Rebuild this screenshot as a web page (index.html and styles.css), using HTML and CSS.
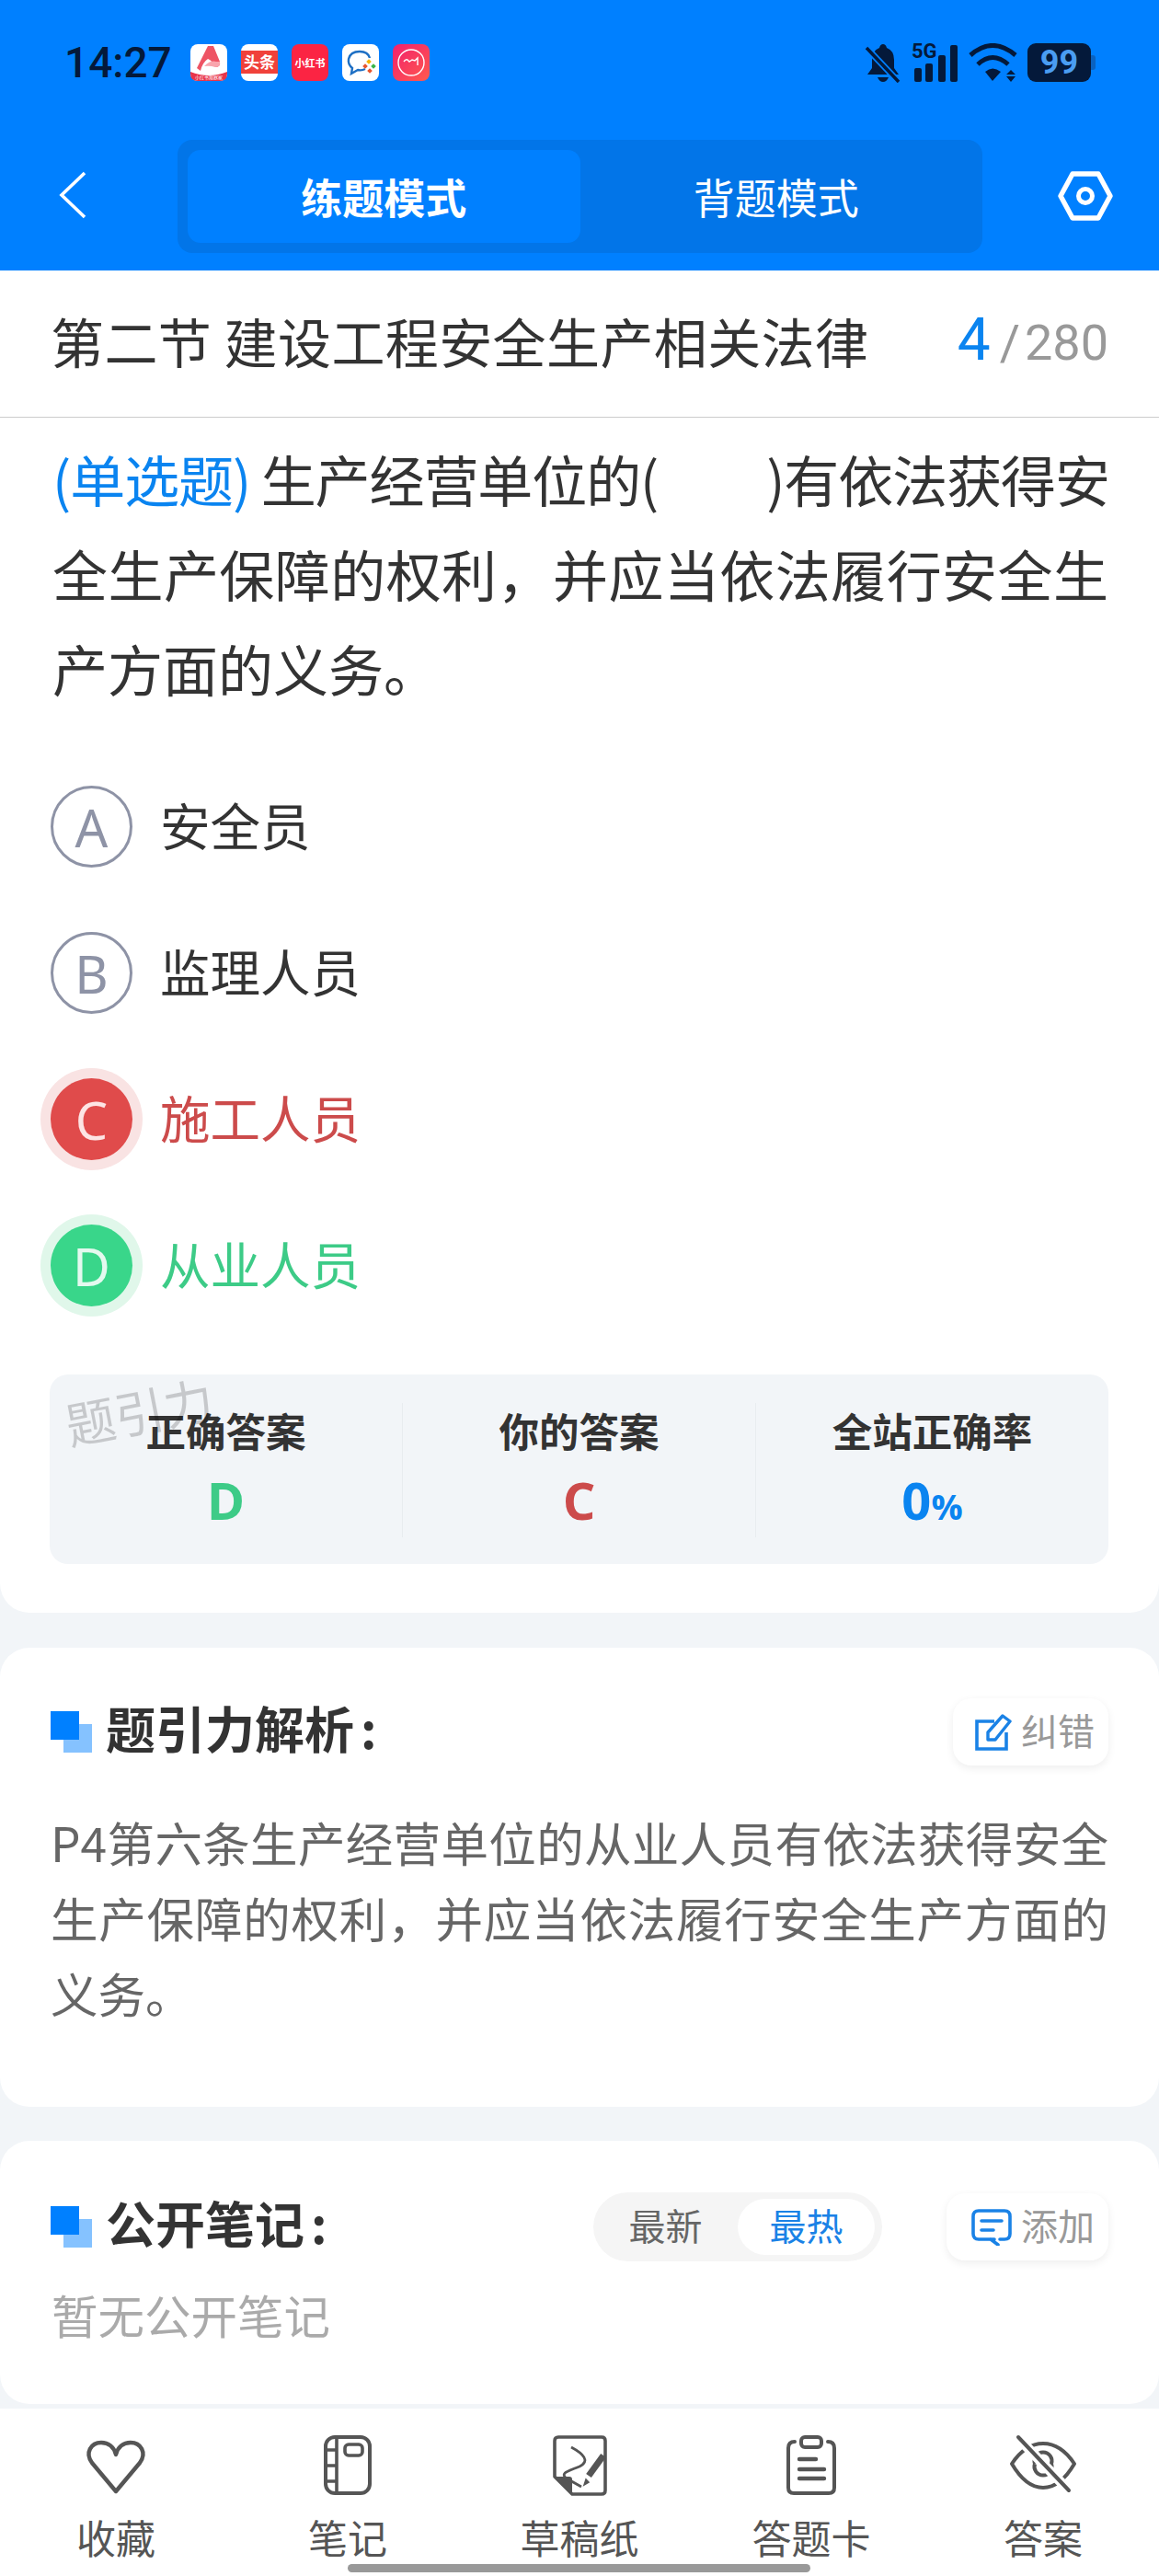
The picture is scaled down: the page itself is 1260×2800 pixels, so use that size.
FILE: index.html
```html
<!DOCTYPE html>
<html>
<head>
    <meta charset="utf-8">
    <link rel="stylesheet" href="styles.css">
</head>

<body>
    <div class="page">
        <div class="topbar">
            <div class="status-bar">
                <span class="clock">14:27</span>
                <div class="app-icons">
                    <svg class="app-icon" viewBox="0 0 40 40">
                        <rect width="40" height="40" rx="8" fill="#fff"/>
                        <path d="M0 30 Q20 38 40 30 V32 Q40 40 32 40 H8 Q0 40 0 32 Z" fill="#e8344a"/>
                        <path d="M7 26 L19 2 H25 L32 19 Q33 25 27 25 Q24 18 19 16 Q13 20 11 29 Z" fill="#ee5464"/>
                        <path d="M15 24 Q22 17 28 19 L32 19 Q33 25 27 25 Q21 23 15 24 Z" fill="#f9a5ad"/>
                        <text class="logo-tiny" x="20" y="38" text-anchor="middle">小红书观察家</text>
                    </svg>
                    <svg class="app-icon" viewBox="0 0 40 40">
                        <rect width="40" height="40" rx="8" fill="#fff"/>
                        <rect y="7" width="40" height="25" fill="#f0413a"/>
                        <text class="logo-toutiao" x="20" y="26" text-anchor="middle">头条</text>
                    </svg>
                    <svg class="app-icon" viewBox="0 0 40 40">
                        <rect width="40" height="40" rx="8" fill="#fb2443"/>
                        <text class="logo-xhs" x="20" y="25" text-anchor="middle">小红书</text>
                    </svg>
                    <svg class="app-icon" viewBox="0 0 40 40">
                        <rect width="40" height="40" rx="8" fill="#fff"/>
                        <path d="M25 27 Q21 29 17 28 L10 32 L11 26 Q6 22 7 16 Q9 8 19 8 Q28 8 30 15" fill="none" stroke="#1d6fc4" stroke-width="2.4"/>
                        <rect x="27" y="17" width="4" height="4" transform="rotate(45 29 19)" fill="#f4b400"/>
                        <rect x="32" y="22" width="4" height="4" transform="rotate(45 34 24)" fill="#3bb54a"/>
                        <rect x="23" y="22" width="4" height="4" transform="rotate(45 25 24)" fill="#e8552d"/>
                        <rect x="28" y="27" width="4" height="4" transform="rotate(45 30 29)" fill="#e8552d"/>
                    </svg>
                    <svg class="app-icon" viewBox="0 0 40 40">
                        <defs>
                            <linearGradient id="meituGrad" x1="0" y1="0" x2="1" y2="1">
                                <stop offset="0" stop-color="#f2206e"/>
                                <stop offset="1" stop-color="#ff5a4d"/>
                            </linearGradient>
                        </defs>
                        <rect width="40" height="40" rx="8" fill="url(#meituGrad)"/>
                        <circle cx="20" cy="20" r="14" fill="none" stroke="#fff" stroke-width="1.4"/>
                        <path d="M12 19 Q14 16 16 17 L18 19 L21 17 L24 18 L27 15 V23" fill="none" stroke="#fff" stroke-width="1.4"/>
                    </svg>
                </div>
                <div class="status-right">
                    <svg class="st-bell" viewBox="0 0 38 43">
                        <path d="M19 1 Q22 1 23 5 Q31 8 31 18 V27 L36 34 H2 L7 27 V18 Q7 8 15 5 Q16 1 19 1 Z M13 37 H25 Q23 42 19 42 Q15 42 13 37 Z" fill="#04193a"/>
                        <path d="M1 5 L36 42" stroke="#0080ff" stroke-width="7"/>
                        <path d="M1 5 L36 42" stroke="#04193a" stroke-width="3.5"/>
                    </svg>
                    <div class="st-signal">
                        <span class="st-5g">5G</span>
                        <svg class="st-bars" viewBox="0 0 50 42">
                            <rect x="3" y="27" width="8" height="15" rx="2"/>
                            <rect x="15" y="22" width="8" height="20" rx="2"/>
                            <rect x="29" y="13" width="8" height="29" rx="2"/>
                            <rect x="42" y="2" width="8" height="40" rx="2"/>
                        </svg>
                    </div>
                    <svg class="st-wifi" viewBox="0 0 54 42">
                        <path d="M2 13 Q26 -8 51 13" fill="none" stroke="#04193a" stroke-width="5"/>
                        <path d="M10 23 Q26 8 43 23" fill="none" stroke="#04193a" stroke-width="5"/>
                        <path d="M18 31 Q26 24 35 31 L26 41 Z" fill="#04193a"/>
                        <path d="M46 29 L51 34 H41 Z M41 36 H51 L46 42 Z" fill="#04193a"/>
                    </svg>
                    <div class="st-battery"><span class="st-level">99</span></div>
                </div>
            </div>
            <div class="nav">
                <svg class="nav-back" viewBox="0 0 30 52">
                    <path d="M28 2 L3 26 L28 50" fill="none" stroke="#fff" stroke-width="3.6"/>
                </svg>
                <div class="mode-switch">
                    <div class="mode-tab active">练题模式</div>
                    <div class="mode-tab">背题模式</div>
                </div>
                <svg class="nav-gear" viewBox="0 0 60 54">
                    <path d="M16 3 H44 L57 27 L44 51 H16 L3 27 Z" fill="none" stroke="#fff" stroke-width="5.4" stroke-linejoin="round"/>
                    <circle cx="30" cy="27" r="7.5" fill="none" stroke="#fff" stroke-width="5"/>
                </svg>
            </div>
        </div>

        <div class="card question-card">
            <div class="title-row">
                <div class="chapter">第二节 建设工程安全生产相关法律</div>
                <div class="counter"><span class="counter-now">4</span><span class="counter-slash">/</span><span class="counter-all">280</span></div>
            </div>
            <div class="question"><span class="q-first"><span class="q-type">(单选题)</span> 生产经营单位的(　　)有依法获得安</span>全生产保障的权利，并应当依法履行安全生产方面的义务。</div>

            <div class="options">
                <div class="option">
                    <div class="opt-letter">A</div>
                    <div class="opt-text">安全员</div>
                </div>
                <div class="option">
                    <div class="opt-letter">B</div>
                    <div class="opt-text">监理人员</div>
                </div>
                <div class="option wrong">
                    <div class="opt-letter">C</div>
                    <div class="opt-text">施工人员</div>
                </div>
                <div class="option right">
                    <div class="opt-letter">D</div>
                    <div class="opt-text">从业人员</div>
                </div>
            </div>

            <div class="stats">
                <div class="stat">
                    <div class="stat-label">正确答案</div>
                    <div class="stat-value green">D</div>
                </div>
                <div class="stat">
                    <div class="stat-label">你的答案</div>
                    <div class="stat-value red">C</div>
                </div>
                <div class="stat">
                    <div class="stat-label">全站正确率</div>
                    <div class="stat-value blue">0<span class="stat-unit">%</span></div>
                </div>
                <div class="watermark">题引力</div>
            </div>
        </div>

        <div class="card analysis-card">
            <div class="section-head">
                <div class="section-title"><span class="square-mark"></span><span class="section-label">题引力解析<span class="colon">:</span></span></div>
                <div class="small-btn fix-btn">
                    <svg class="btn-icon" viewBox="0 0 40 40">
                        <path d="M21 8 H2 V38 H34 V20" fill="none" stroke="#1a82e6" stroke-width="3.6"/>
                        <path d="M14 28 V20 L30 2 L38 8 L22 28 Z" fill="none" stroke="#1a82e6" stroke-width="3.4" stroke-linejoin="round"/>
                    </svg>
                    <span class="btn-text">纠错</span>
                </div>
            </div>
            <div class="analysis-text">P4第六条生产经营单位的从业人员有依法获得安全生产保障的权利，并应当依法履行安全生产方面的义务。</div>
        </div>

        <div class="card notes-card">
            <div class="section-head">
                <div class="section-title"><span class="square-mark"></span><span class="section-label">公开笔记<span class="colon">:</span></span></div>
                <div class="notes-tools">
                    <div class="sort-pill">
                        <div class="sort-item"><span class="btn-text">最新</span></div>
                        <div class="sort-item active"><span class="btn-text">最热</span></div>
                    </div>
                    <div class="small-btn">
                        <svg class="btn-icon wide" viewBox="0 0 44 40">
                            <path d="M25 33 H8 Q2 33 2 27 V8 Q2 2 8 2 H36 Q42 2 42 8 V27 Q42 33 36 33 H31 M21 33 L29 39" fill="none" stroke="#1a82e6" stroke-width="3.6" stroke-linecap="round"/>
                            <path d="M11 13 H33 M11 23 H24" fill="none" stroke="#1a82e6" stroke-width="3.6" stroke-linecap="round"/>
                        </svg>
                        <span class="btn-text">添加</span>
                    </div>
                </div>
            </div>
            <div class="no-notes">暂无公开笔记</div>
        </div>

        <div class="tabbar">
            <div class="tab">
                <svg class="tab-icon" viewBox="0 0 72 70">
                    <path d="M36 63 L10 32 C2 21 9 10 20 10 C28 10 34 15 36 23 C38 15 44 10 52 10 C63 10 70 21 62 32 Z" fill="none" stroke="#555" stroke-width="4.4" stroke-linejoin="round"/>
                </svg>
                <span>收藏</span>
            </div>
            <div class="tab">
                <svg class="tab-icon" viewBox="0 0 72 70">
                    <rect x="12" y="4" width="48" height="61" rx="10" fill="none" stroke="#555" stroke-width="4"/>
                    <path d="M24 4 V65 M12 18 H24 M12 35 H24 M12 52 H24" fill="none" stroke="#555" stroke-width="3.6"/>
                    <rect x="33" y="12" width="19" height="12" rx="4" fill="none" stroke="#555" stroke-width="3.6"/>
                </svg>
                <span>笔记</span>
            </div>
            <div class="tab">
                <svg class="tab-icon" viewBox="0 0 72 70">
                    <path d="M9 47 V8 Q9 4 13 4 H60 Q64 4 64 8 V62 Q64 66 60 66 H28 Z" fill="none" stroke="#555" stroke-width="3.6" stroke-linejoin="round"/>
                    <path d="M9 47 L28 66 V50 Q28 47 25 47 Z" fill="#555"/>
                    <path d="M27 15 C40 22 48 30 36 36 C24 41 14 43 22 49 L38 58" fill="none" stroke="#555" stroke-width="2.8"/>
                    <path d="M62 24 L46 46" stroke="#555" stroke-width="7"/>
                    <path d="M43 50 L41 56 L46 53 Z" fill="#555" stroke="#555" stroke-width="1.5"/>
                </svg>
                <span>草稿纸</span>
            </div>
            <div class="tab">
                <svg class="tab-icon" viewBox="0 0 72 70">
                    <path d="M18 9 Q11 9 11 16 V59 Q11 65 17 65 H55 Q61 65 61 59 V16 Q61 9 54 9" fill="none" stroke="#555" stroke-width="4" stroke-linecap="round"/>
                    <rect x="25" y="4" width="22" height="11" rx="4" fill="none" stroke="#555" stroke-width="4"/>
                    <path d="M23 28 H41 M23 39 H50 M23 49 H50" fill="none" stroke="#555" stroke-width="4.4" stroke-linecap="round"/>
                </svg>
                <span>答题卡</span>
            </div>
            <div class="tab">
                <svg class="tab-icon" viewBox="0 0 72 70">
                    <path d="M2 33 C12 18 24 11 36 11 C48 11 60 18 70 33 C60 50 48 59 36 59 C24 59 12 50 2 33 Z" fill="none" stroke="#555" stroke-width="4" stroke-linejoin="round"/>
                    <path d="M27 33 A9.5 9.5 0 1 0 45 33 A9.5 9.5 0 1 0 27 33" fill="none" stroke="#555" stroke-width="4"/>
                    <path d="M10 6 L63 61" stroke="#fff" stroke-width="11"/>
                    <path d="M9 4 L64 62" stroke="#555" stroke-width="4" stroke-linecap="round"/>
                </svg>
                <span>答案</span>
            </div>
            <div class="home-bar"></div>
        </div>
    </div>
</body>
</html>
```

FILE: styles.css
```css
* {
    box-sizing: border-box;
}

body {
    margin: 0;
    font-family: "Noto Sans CJK SC", "Noto Sans", sans-serif;
    color: #333;
}

.page {
    width: 1260px;
    height: 2800px;
    overflow: hidden;
    background-color: #f2f5f8;
    display: flex;
    flex-direction: column;
}

/* top blue area */
.topbar {
    height: 294px;
    background-color: #0080ff;
    flex-shrink: 0;
}

.status-bar {
    height: 136px;
    padding: 0 74px 0 70px;
    display: flex;
    align-items: center;
}

.clock {
    width: 137px;
    font-family: Roboto, sans-serif;
    font-size: 46px;
    font-weight: 500;
    color: #04193a;
}

.app-icons {
    display: flex;
    gap: 15px;
}

.app-icon {
    width: 40px;
    height: 40px;
    display: block;
}

.logo-tiny {
    font-size: 5px;
    fill: #fff;
}

.logo-toutiao {
    font-size: 17px;
    font-weight: 700;
    fill: #fff;
}

.logo-xhs {
    font-size: 11px;
    font-weight: 700;
    fill: #fff;
}

.status-right {
    margin-left: auto;
    display: flex;
    align-items: center;
}

.st-bell {
    width: 38px;
    height: 43px;
    display: block;
}

.st-signal {
    width: 50px;
    height: 42px;
    margin-left: 12px;
    position: relative;
}

.st-5g {
    position: absolute;
    left: 0;
    top: -3px;
    font-family: Roboto, sans-serif;
    font-size: 22px;
    font-weight: 700;
    line-height: 24px;
    color: #04193a;
}

.st-bars {
    width: 50px;
    height: 42px;
    display: block;
    fill: #04193a;
}

.st-wifi {
    width: 54px;
    height: 42px;
    margin-left: 12px;
    display: block;
}

.st-battery {
    width: 69px;
    height: 42px;
    margin-left: 10px;
    background-color: #04193a;
    border-radius: 9px;
    display: flex;
    align-items: center;
    justify-content: center;
    position: relative;
}

.st-battery::after {
    content: "";
    position: absolute;
    right: -5px;
    top: 13px;
    width: 5px;
    height: 16px;
    background-color: #0a62c0;
    border-radius: 0 3px 3px 0;
}

.st-level {
    font-family: Roboto, sans-serif;
    font-size: 36px;
    font-weight: 700;
    color: #4a9df2;
}

.nav {
    height: 158px;
    padding: 16px 50px 0 64px;
    display: flex;
    align-items: flex-start;
}

.nav-back {
    width: 30px;
    height: 52px;
    margin-top: 34px;
    display: block;
}

.mode-switch {
    width: 875px;
    height: 123px;
    margin-left: 99px;
    padding: 11px;
    background-color: #0275e8;
    border-radius: 16px;
    display: flex;
}

.mode-tab {
    flex: 1;
    border-radius: 14px;
    display: flex;
    align-items: center;
    justify-content: center;
    font-size: 45px;
    color: #fff;
}

.mode-tab.active {
    background-color: #0080ff;
    font-weight: 700;
}

.nav-gear {
    width: 60px;
    height: 54px;
    margin-left: 82px;
    margin-top: 34px;
    display: block;
}

/* cards */
.card {
    background-color: #fff;
    flex-shrink: 0;
}

.question-card {
    height: 1459px;
    border-radius: 0 0 32px 32px;
}

.title-row {
    height: 160px;
    padding: 0 55px 8px 55px;
    border-bottom: 1px solid #ccc;
    display: flex;
    align-items: center;
    justify-content: space-between;
}

.chapter {
    font-size: 58px;
    letter-spacing: 0.4px;
    color: #333;
    line-height: 1;
}

.counter {
    display: flex;
    align-items: baseline;
    font-family: Roboto, sans-serif;
    color: #999;
    font-size: 54px;
}

.counter-now {
    font-size: 64px;
    color: #0a84f0;
    margin-right: 10px;
}

.counter-slash {
    margin-right: 5px;
}

.question {
    margin: 14px 55px 0 57px;
    font-size: 60px;
    line-height: 103px;
    text-align: justify;
    color: #333;
}

.q-first {
    letter-spacing: -2px;
}

.q-type {
    color: #0a84f0;
}

.options {
    margin: 77px 0 0 55px;
    display: flex;
    flex-direction: column;
    gap: 70px;
}

.option {
    height: 89px;
    display: flex;
    align-items: center;
}

.opt-letter {
    width: 89px;
    height: 89px;
    border: 3px solid #8e93a6;
    border-radius: 50%;
    display: flex;
    align-items: center;
    justify-content: center;
    font-family: "Noto Sans", sans-serif;
    font-size: 56px;
    font-weight: 400;
    color: #8e93a6;
}

.opt-text {
    margin-left: 30px;
    padding-bottom: 7px;
    font-size: 54.5px;
    color: #333;
}

.option.wrong .opt-letter {
    border: none;
    background-color: #e04b4b;
    color: #fde4e4;
    box-shadow: 0 0 0 11px #f9e3e3;
}

.option.wrong .opt-text {
    color: #cc4b4b;
}

.option.right .opt-letter {
    border: none;
    background-color: #39d68a;
    color: #e4f9ef;
    box-shadow: 0 0 0 11px #e0f7ea;
}

.option.right .opt-text {
    color: #3dcb87;
}

.stats {
    height: 206px;
    margin: 74px 55px 0 54px;
    padding-top: 31px;
    background-color: #f2f5f8;
    border-radius: 20px;
    display: flex;
    position: relative;
}

.stat {
    flex: 1;
    height: 146px;
    border-right: 1px solid #e8ecef;
    text-align: center;
}

.stat:nth-child(3) {
    border-right: none;
}

.stat-label {
    font-size: 43.5px;
    font-weight: 700;
    line-height: 60px;
    color: #333;
}

.stat-value {
    margin-top: 10px;
    font-family: "Open Sans", sans-serif;
    font-size: 56px;
    font-weight: 700;
    line-height: 70px;
}

.stat-unit {
    font-size: 38px;
}

.green {
    color: #3dcb87;
}

.red {
    color: #cc4b4b;
}

.blue {
    color: #0a84f0;
}

.watermark {
    position: absolute;
    left: 16px;
    top: 9px;
    font-size: 54px;
    line-height: 60px;
    color: rgba(0, 0, 0, 0.18);
    transform: rotate(-11deg);
}

.analysis-card {
    height: 499px;
    margin-top: 38px;
    padding: 55px 55px 0 55px;
    border-radius: 32px;
}

.notes-card {
    height: 286px;
    margin-top: 37px;
    padding: 56px 55px 0 55px;
    border-radius: 32px;
}

.section-head {
    display: flex;
    align-items: center;
    justify-content: space-between;
}

.section-title {
    display: flex;
    align-items: center;
    font-size: 54px;
    font-weight: 700;
    color: #333;
}

.section-label {
    margin-top: -10px;
}

.colon {
    margin-left: 7px;
}

.square-mark {
    width: 45px;
    height: 45px;
    margin-right: 15px;
    background: linear-gradient(#0080ff, #0080ff) left top / 31px 31px no-repeat,
        linear-gradient(#85c2ff, #85c2ff) right bottom / 31px 31px no-repeat;
}

.small-btn {
    height: 73px;
    padding: 0 15px 0 27px;
    background-color: #fff;
    border-radius: 20px;
    box-shadow: 0 3px 10px rgba(0, 0, 0, 0.07);
    display: flex;
    align-items: center;
    gap: 10px;
    font-size: 40px;
    color: #999;
}

.small-btn.fix-btn {
    padding-left: 24px;
}

.btn-text {
    padding-bottom: 5px;
}

.btn-icon {
    width: 40px;
    height: 40px;
    display: block;
}

.btn-icon.wide {
    width: 44px;
    height: 40px;
}

.notes-tools {
    display: flex;
    align-items: center;
    gap: 70px;
}

.sort-pill {
    width: 314px;
    height: 75px;
    padding: 7px 8px 7px 0;
    background-color: #f5f5f5;
    border-radius: 38px;
    display: flex;
    align-items: center;
    font-size: 40px;
    color: #666;
}

.sort-item {
    width: 157px;
    height: 61px;
    border-radius: 31px;
    display: flex;
    align-items: center;
    justify-content: center;
}

.sort-item.active {
    width: 149px;
    background-color: #fff;
    color: #1a82e6;
}

.analysis-text {
    margin-top: 42px;
    font-size: 51.5px;
    line-height: 82px;
    text-align: justify;
    color: #666;
}

.no-notes {
    margin-top: 27px;
    margin-left: 1px;
    font-size: 50.5px;
    line-height: 60px;
    color: #aaa;
}

/* bottom tabs */
.tabbar {
    flex: 1;
    margin-top: 5px;
    background-color: #fff;
    padding-top: 27px;
    display: grid;
    grid-template-columns: repeat(5, 1fr);
    position: relative;
}

.tab {
    display: flex;
    flex-direction: column;
    align-items: center;
    font-size: 43px;
    line-height: 56px;
    color: #555;
}

.tab-icon {
    width: 72px;
    height: 70px;
    margin-bottom: 14px;
    display: block;
}

.home-bar {
    position: absolute;
    left: 378px;
    bottom: 4px;
    width: 503px;
    height: 9px;
    background-color: #999;
    border-radius: 5px;
}
```
